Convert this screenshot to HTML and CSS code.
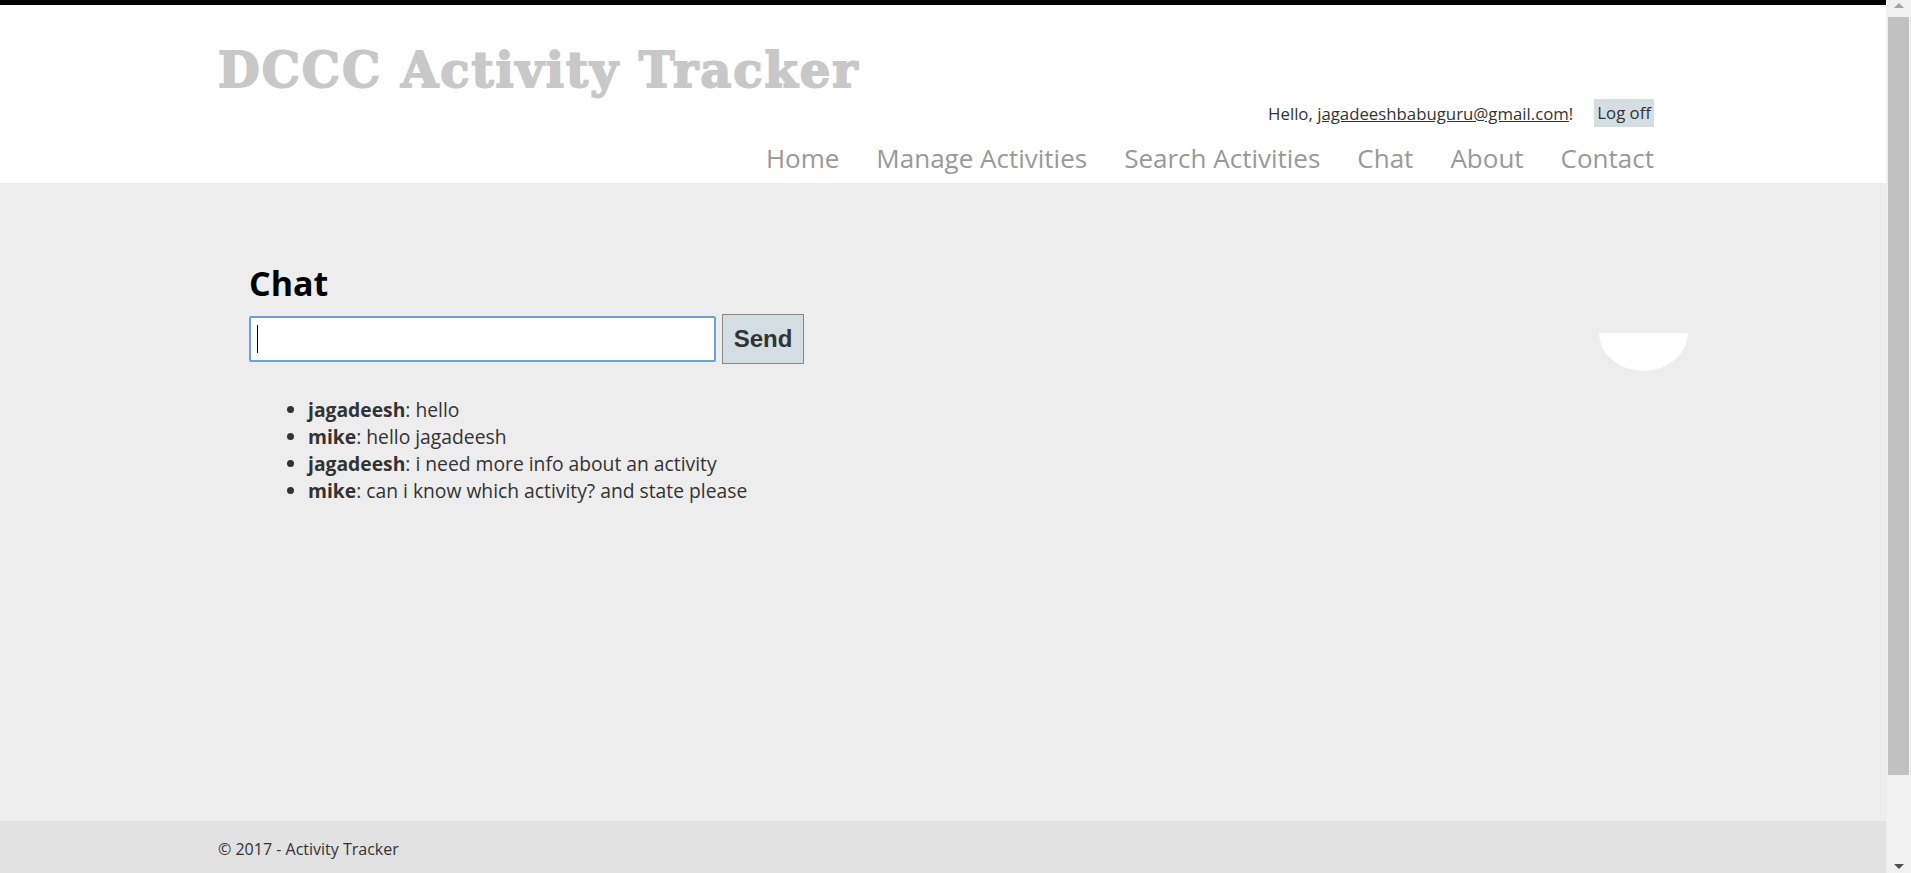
FILE: index.html
```html
<!DOCTYPE html>
<html lang="en">
<head>
<meta charset="utf-8">
<title>Chat - DCCC Activity Tracker</title>
<link rel="stylesheet" href="styles.css">
</head>
<body>
<div class="window">
  <div class="viewport">
    <div class="topbar"></div>
    <header class="header">
      <div class="header-inner">
        <h1 class="brand">DCCC Activity Tracker</h1>
        <div class="userbar">
          <span class="hello">Hello, <a href="#" class="user-link">jagadeeshbabuguru@gmail.com</a>!</span>
          <a href="#" class="logoff">Log off</a>
        </div>
        <nav class="nav">
          <a href="#">Home</a>
          <a href="#">Manage Activities</a>
          <a href="#">Search Activities</a>
          <a href="#">Chat</a>
          <a href="#">About</a>
          <a href="#">Contact</a>
        </nav>
      </div>
    </header>
    <main class="main">
      <div class="content">
        <h2 class="chat-title">Chat</h2>
        <div class="chat-form">
          <div class="input-wrap">
            <input type="text" class="message-input">
            <span class="caret"></span>
          </div>
          <button class="send-btn">Send</button>
        </div>
        <ul class="messages">
          <li><strong>jagadeesh</strong>: hello</li>
          <li><strong>mike</strong>: hello jagadeesh</li>
          <li><strong>jagadeesh</strong>: i need more info about an activity</li>
          <li><strong>mike</strong>: can i know which activity? and state please</li>
        </ul>
        <div class="half-circle"></div>
      </div>
    </main>
    <footer class="footer">
      <p>&copy; 2017 - Activity Tracker</p>
    </footer>
  </div>
  <div class="scrollbar">
    <div class="arrow arrow-up"></div>
    <div class="track"><div class="thumb"></div></div>
    <div class="arrow arrow-down"></div>
  </div>
</div>
</body>
</html>
```
FILE: styles.css
```css
* { box-sizing: border-box; }
html, body { margin: 0; padding: 0; height: 100%; overflow: hidden; }
body {
  font-family: "Open Sans", "Noto Sans", sans-serif;
  color: #333;
}
.window {
  display: flex;
  width: 1911px;
  height: 873px;
}
.viewport {
  flex: 1;
  display: flex;
  flex-direction: column;
  min-width: 0;
}
.topbar {
  height: 5px;
  background: #000;
}
.header {
  height: 178px;
  background: #fff;
}
.header-inner {
  width: 1436px;
  margin-left: 218px;
  display: flex;
  flex-direction: column;
}
.brand {
  margin: 37px 0 0 0;
  font-family: "DejaVu Serif", serif;
  font-weight: bold;
  font-size: 48px;
  line-height: 56px;
  height: 56px;
  color: #c8c8c8;
  letter-spacing: 2px;
  -webkit-text-stroke: 1.8px #c8c8c8;
  white-space: nowrap;
}
.userbar {
  display: flex;
  justify-content: flex-end;
  align-items: center;
  margin-top: 1px;
  height: 28px;
  font-size: 16.8px;
}
.hello { color: #333; }
.user-link { color: #333; text-decoration: underline; }
.logoff {
  margin-left: 21px;
  background: #d4dde1;
  color: #333;
  text-decoration: none;
  height: 28px;
  line-height: 28px;
  padding: 0 3px;
}
.nav {
  display: flex;
  justify-content: flex-end;
  gap: 37px;
  margin-top: 14px;
}
.nav a {
  font-size: 26px;
  line-height: 34px;
  color: #999;
  text-decoration: none;
}
.main {
  flex: 1;
  background: #ededed;
}
.content {
  position: relative;
  margin-left: 249px;
  padding-top: 80px;
}
.chat-title {
  margin: 0;
  font-size: 34px;
  line-height: 40px;
  font-weight: bold;
  color: #000;
}
.chat-form {
  display: flex;
  align-items: center;
  gap: 6px;
  margin-top: 11px;
}
.input-wrap {
  position: relative;
}
.message-input {
  display: block;
  width: 467px;
  height: 46px;
  border: 2px solid #6f9fdd;
  border-radius: 2px;
  background: #fff;
  outline: none;
  padding: 0 8px;
}
.caret {
  position: absolute;
  left: 8px;
  top: 9px;
  width: 1px;
  height: 28px;
  background: #000;
}
.send-btn {
  height: 50px;
  width: 82px;
  background: #d4dde2;
  border: 1px solid #888;
  font-family: "Liberation Sans", Arial, sans-serif;
  font-weight: bold;
  font-size: 24px;
  color: #333;
  padding: 0;
}
.messages {
  margin: 32px 0 0 0;
  padding-left: 59px;
  font-size: 19.3px;
  line-height: 27px;
  color: #333;
}
.messages strong { font-weight: bold; }
.half-circle {
  position: absolute;
  left: 1350px;
  top: 150px;
  width: 89px;
  height: 38px;
  background: #fff;
  border-radius: 0 0 44.5px 44.5px / 0 0 38px 38px;
}
.footer {
  height: 52px;
  background: #e1e1e1;
  padding-left: 218px;
  padding-top: 6px;
}
.footer p {
  margin: 0;
  font-size: 16px;
  line-height: 44px;
  color: #333;
}
.scrollbar {
  width: 25px;
  background: #f0f0f0;
  display: flex;
  flex-direction: column;
  align-items: center;
}
.arrow {
  width: 0;
  height: 0;
  border-left: 5px solid transparent;
  border-right: 5px solid transparent;
}
.arrow-up {
  margin-top: 3px;
  border-bottom: 5px solid #a3a3a3;
}
.arrow-down {
  margin-bottom: 4px;
  border-top: 5px solid #505050;
}
.track {
  flex: 1;
  width: 100%;
  padding: 1px 2px 0 2px;
  display: flex;
  flex-direction: column;
}
.thumb {
  margin-top: 8px;
  height: 758px;
  width: 21px;
  background: #c1c1c1;
}
```
